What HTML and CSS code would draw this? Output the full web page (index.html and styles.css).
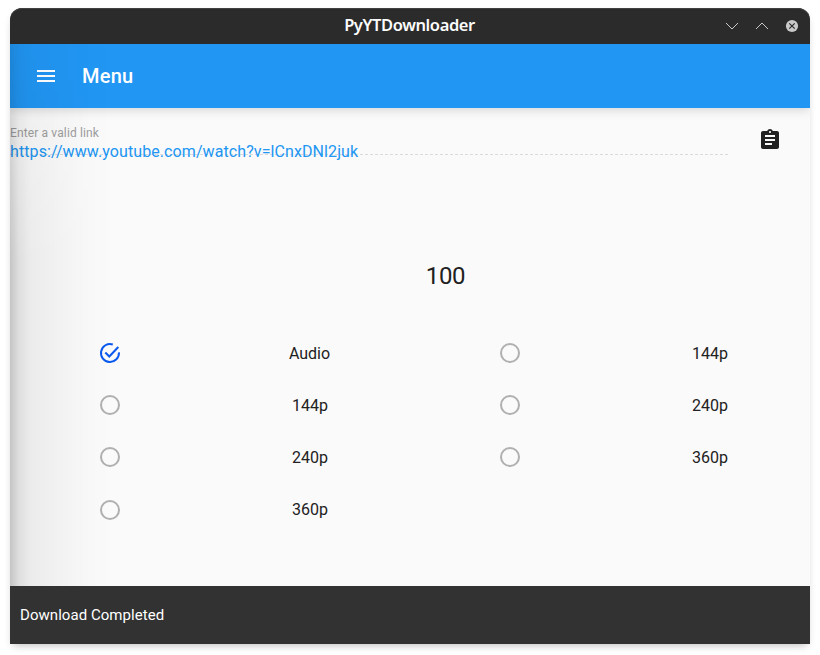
FILE: index.html
```html
<!DOCTYPE html>
<html lang="en">
<head>
<meta charset="utf-8">
<title>PyYTDownloader</title>
<link rel="stylesheet" href="styles.css">
</head>
<body>
<div class="window">
  <header class="titlebar">
    <span></span>
    <h1 class="window-title">PyYTDownloader</h1>
    <div class="controls">
      <svg width="14" height="14" viewBox="0 0 14 14"><path d="M1 4l6 6 6-6" fill="none" stroke="#c8c8c8" stroke-width="1"/></svg>
      <svg width="14" height="14" viewBox="0 0 14 14"><path d="M1 10l6-6 6 6" fill="none" stroke="#c8c8c8" stroke-width="1"/></svg>
      <svg width="14" height="14" viewBox="0 0 14 14"><circle cx="7" cy="7" r="6.1" fill="#c8c8c8"/><path d="M4.3 4.3l5.4 5.4M9.7 4.3l-5.4 5.4" stroke="#2b2b2b" stroke-width="1.2"/></svg>
    </div>
  </header>
  <div class="app">
    <nav class="toolbar">
      <svg width="24" height="24" viewBox="0 0 24 24" fill="#fff"><path d="M3 18h18v-2H3v2zm0-5h18v-2H3v2zm0-7v2h18V6H3z"/></svg>
      <span class="toolbar-title">Menu</span>
    </nav>
    <main class="content">
      <div class="link-row">
        <div class="field">
          <div class="hint">Enter a valid link</div>
          <div class="url">https://www.youtube.com/watch?v=lCnxDNl2juk</div>
        </div>
        <svg class="paste" width="24" height="24" viewBox="0 0 24 24" fill="#212121"><path d="M19 3h-4.180C14.400 1.840 13.300 1 12 1c-1.300 0-2.400.840-2.820 2H5c-1.100 0-2 .900-2 2v14c0 1.100.900 2 2 2h14c1.100 0 2-.900 2-2V5c0-1.100-.900-2-2-2zm-7 0c.550 0 1 .450 1 1s-.450 1-1 1-1-.450-1-1 .450-1 1-1zm2 14H7v-2h7v2zm3-4H7v-2h10v2zm0-4H7V7h10v2z"/></svg>
      </div>
      <div class="progress">100</div>
      <div class="options">
        <svg class="checked" width="24" height="24" viewBox="0 0 24 24"><path d="M20.950 11.300A9 9 0 1 1 14.800 3.450" fill="none" stroke="#0a59ee" stroke-width="2"/><path d="M7.300 11.500l4 4L20.300 6" fill="none" stroke="#0a59ee" stroke-width="2"/></svg><span class="audio">Audio</span>
        <i class="radio"></i><span>144p</span>
        <i class="radio"></i><span>144p</span>
        <i class="radio"></i><span>240p</span>
        <i class="radio"></i><span>240p</span>
        <i class="radio"></i><span>360p</span>
        <i class="radio"></i><span>360p</span>
      </div>
    </main>
    <div class="drawer-shadow"></div>
  </div>
  <footer class="snackbar">Download Completed</footer>
</div>
</body>
</html>
```
FILE: styles.css
```css
* { box-sizing: border-box; }
body {
  margin: 0;
  padding: 8px 10px 11px;
  height: 655px;
  overflow: hidden;
  background: #fff;
  font-family: Roboto, sans-serif;
  color: #212121;
}
.window {
  height: 636px;
  display: flex;
  flex-direction: column;
  border-radius: 12px 12px 0 0;
  box-shadow: 0 4px 9px -3px rgba(0, 0, 0, .28);
}
.titlebar {
  height: 36px;
  flex: none;
  display: grid;
  grid-template-columns: 1fr auto 1fr;
  align-items: center;
  background: #2b2b2b;
  border-radius: 12px 12px 0 0;
  box-shadow: inset 0 1px #414141;
  color: #fcfcfc;
}
.window-title {
  margin: 0 1px 2px 0;
  font: 600 16.5px/34px "Noto Sans", sans-serif;
  letter-spacing: -.4px;
}
.controls {
  display: flex;
  justify-content: flex-end;
  gap: 16px;
  padding-right: 11px;
}
.app {
  position: relative;
  flex: 1;
  display: flex;
  flex-direction: column;
  background: #fafafa;
}
.toolbar {
  height: 64px;
  flex: none;
  display: flex;
  align-items: center;
  gap: 24px;
  padding-left: 24px;
  background: #2196f3;
  box-shadow: 0 2px 10px rgba(0, 0, 0, .15);
  clip-path: inset(0 0 -20px 0);
  color: #fff;
}
.toolbar-title {
  font-size: 20px;
  font-weight: 500;
  letter-spacing: .25px;
}
.content { flex: 1; }
.link-row { display: flex; }
.field {
  width: 718px;
  height: 47px;
  padding-top: 17px;
  background: repeating-linear-gradient(90deg, #dadada 0 3px, transparent 3px 5px) 0 46px / 100% 1px no-repeat;
}
.hint {
  height: 15px;
  font-size: 12px;
  line-height: 17px;
  letter-spacing: .13px;
  color: #9e9e9e;
}
.url {
  font-size: 16px;
  line-height: 24px;
  letter-spacing: .09px;
  color: #2196f3;
}
.paste { margin: 20px 0 0 30px; }
.progress {
  width: 800px;
  margin-top: 106px;
  padding-left: 71px;
  font-size: 24px;
  line-height: 30px;
  letter-spacing: -.3px;
  text-align: center;
}
.options {
  display: grid;
  grid-template-columns: repeat(4, 200px);
  grid-auto-rows: 52.1px;
  align-items: center;
  justify-items: center;
  margin-top: 36.2px;
  font-size: 16px;
}
.audio { margin-right: 1px; }
.radio {
  width: 20px;
  height: 20px;
  border: 2px solid #b0b0b0;
  border-radius: 50%;
}
.drawer-shadow {
  position: absolute;
  inset: 0 auto 0 0;
  width: 100px;
  pointer-events: none;
  background: linear-gradient(90deg, rgba(0, 0, 0, .21), rgba(0, 0, 0, .11) 9px, rgba(0, 0, 0, .06) 20px, rgba(0, 0, 0, .03) 50px, rgba(0, 0, 0, .008) 80px, transparent 100px);
  mask-image: linear-gradient(rgba(0, 0, 0, .5), #000 220px);
}
.snackbar {
  height: 58px;
  flex: none;
  padding-left: 10px;
  background: #323232;
  color: #fff;
  font-size: 15px;
  line-height: 58px;
  letter-spacing: .05px;
}
```
